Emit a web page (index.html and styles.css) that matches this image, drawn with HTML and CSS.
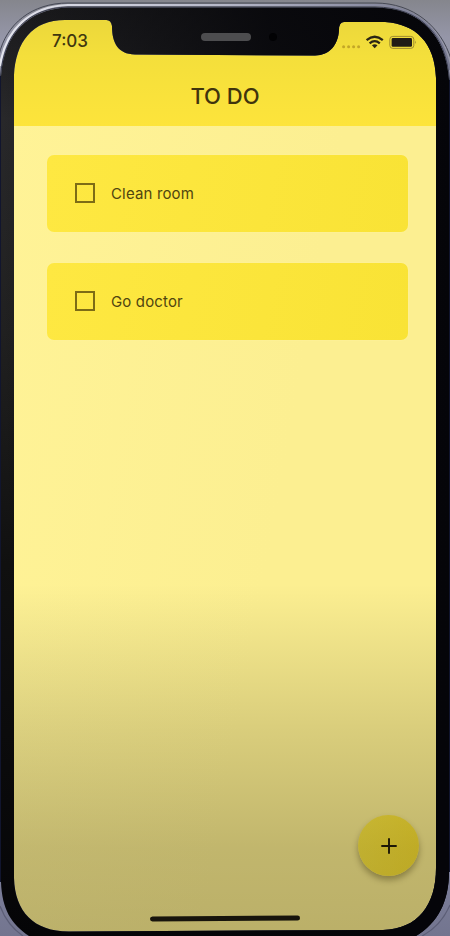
FILE: index.html
```
<!DOCTYPE html>
<html lang="en">
<head>
<meta charset="utf-8">
<title>TO DO</title>
<link rel="stylesheet" href="styles.css">
</head>
<body>
<div class="phone">
  <main class="screen">
    <header class="header">
      <div class="status">
        <span class="time">7:03</span>
        <svg class="status-icons" width="76" height="16" viewBox="0 0 76 16">
          <g fill="#c3a727"><circle cx="2.6" cy="12.7" r="1.5"/><circle cx="7.6" cy="12.7" r="1.5"/><circle cx="12.6" cy="12.7" r="1.5"/><circle cx="17.6" cy="12.7" r="1.5"/></g>
          <g fill="none" stroke="#2b2514" stroke-width="2.3"><path d="M25.6 6.1Q33.7 -.7 41.8 6.1"/><path d="M28.6 9.3Q33.7 5 38.8 9.3"/></g>
          <path fill="#2b2514" d="M30.9 11.3Q33.7 9.2 36.5 11.3L33.7 14.3Z"/>
          <rect x="48.8" y="2.4" width="24" height="12" rx="3" fill="none" stroke="#a08c2f"/>
          <rect x="50.6" y="4.1" width="20.4" height="8.6" rx="1.3" fill="#211c16"/>
          <path d="M74.2 6.5q1.8 1.8 0 3.6z" fill="#a08c2f"/>
        </svg>
      </div>
      <h1 class="title">TO DO</h1>
    </header>
    <section class="list">
      <label class="item"><span class="box"></span><span class="label">Clean room</span></label>
      <label class="item"><span class="box"></span><span class="label">Go doctor</span></label>
    </section>
    <button class="fab" aria-label="Add"><svg width="16" height="16" viewBox="0 0 16 16"><path d="M8 .3V15.7M.3 8H15.7" stroke="#201b08" stroke-width="1.9"/></svg></button>
    <div class="home"></div>
  </main>
  <svg class="frame" width="450" height="936" viewBox="0 0 450 936">
    <defs>
      <linearGradient id="wall" gradientUnits="userSpaceOnUse" x1="0" y1="0" x2="0" y2="936"><stop offset="0" stop-color="#85868d"/><stop offset=".04" stop-color="#9596a8"/><stop offset=".9" stop-color="#8083a0"/><stop offset="1" stop-color="#73758f"/></linearGradient>
      <linearGradient id="bezel" x2="0" y2="1"><stop offset="0" stop-color="#1b1b1d"/><stop offset=".12" stop-color="#28282a"/><stop offset=".35" stop-color="#202020"/><stop offset=".6" stop-color="#101010"/><stop offset="1" stop-color="#050507"/></linearGradient>
      <linearGradient id="dark"><stop offset="0" stop-color="#050509" stop-opacity="0"/><stop offset=".6" stop-color="#050509" stop-opacity=".8"/><stop offset="1" stop-color="#050509"/></linearGradient>
      <linearGradient id="rim" gradientUnits="userSpaceOnUse" x1="0" y1="0" x2="450" y2="0"><stop offset="0" stop-color="#e4e5ee"/><stop offset=".5" stop-color="#b5b7c8"/><stop offset="1" stop-color="#74768e"/></linearGradient>
    </defs>
    <g fill-rule="evenodd">
      <path fill="url(#wall)" d="M0 0H450V936H0Z M14 75C16 42 32 20 65 20H105Q111 19 112 26C112 43 118 54 135 54.5L315 55.5C330 55 338 45 339 30Q339 22 344 22L385 22C416 24 435 43 436 78V868C436 905 418 929 383 930L70 931.5C34 932 15 912 14 878Z"/>
      <path fill="url(#bezel)" d="M1 76C4 34 28 9 68 7.5H375C421 8 446 36 449 80V872C449 901 438 923 416 936H29C11 924 2 909 1 882Z M14 75C16 42 32 20 65 20H105Q111 19 112 26C112 43 118 54 135 54.5L315 55.5C330 55 338 45 339 30Q339 22 344 22L385 22C416 24 435 43 436 78V868C436 905 418 929 383 930L70 931.5C34 932 15 912 14 878Z"/>
      <path fill="url(#dark)" d="M1 76C4 34 28 9 68 7.5H375C421 8 446 36 449 80V872C449 901 438 923 416 936H29C11 924 2 909 1 882Z M14 75C16 42 32 20 65 20H105Q111 19 112 26C112 43 118 54 135 54.5L315 55.5C330 55 338 45 339 30Q339 22 344 22L385 22C416 24 435 43 436 78V868C436 905 418 929 383 930L70 931.5C34 932 15 912 14 878Z"/>
    </g>
    <g fill="none">
      <path stroke="#454855" d="M-1 55C6 24 32 3 68 3H375C414 3 441 27 451 59"/>
      <path stroke="url(#rim)" stroke-width="2.2" d="M0 66C5 30 30 6 68 5H375C416 5.500 443 31 450 70"/>
      <path stroke="#373a4c" stroke-width="1" d="M.5 76C4 33 28 8 68 7H375C421 7.500 446 35 449.500 80"/>
      <path stroke="#5c5e76" stroke-width="1.3" d="M0 906Q7 925 23 936M450 905Q441 926 422 936"/>
      <path stroke="#11152e" d="M.5 76V882M449.500 80V872"/>
    </g>
    <rect x="201" y="33" width="50" height="8" rx="4" fill="#4d4d4f"/>
    <circle cx="273" cy="37" r="4" fill="#020204"/>
  </svg>
</div>
</body>
</html>
```
FILE: styles.css
```
* { box-sizing: border-box; }

body {
  margin: 0;
  overflow: hidden;
  background: #8f91a8;
  font-family: Inter, "Liberation Sans", sans-serif;
}

.phone {
  position: relative;
  width: 450px;
  height: 936px;
  padding: 18px 13px 4px;
}

.screen {
  position: relative;
  display: flex;
  flex-direction: column;
  height: 100%;
  background: linear-gradient(100deg, #fff397, #fcef91 60%);
}

.screen::after {
  content: "";
  position: absolute;
  inset: 566px 0 0;
  background: linear-gradient(rgba(18, 12, 0, 0), rgba(18, 12, 0, .15) 42%, rgba(18, 12, 0, .25) 76%, rgba(18, 12, 0, .28));
  pointer-events: none;
}

.header {
  height: 108px;
  background: linear-gradient(#ebd73b, #f4df3b 35%, #fde43b);
}

.status {
  display: flex;
  justify-content: space-between;
  padding: 13px 20px 0 39px;
  height: 64px;
}

.time {
  font-size: 17px;
  line-height: 20px;
  font-weight: 550;
  color: #40370f;
}

.status-icons { margin-top: 3px; }

.title {
  margin: 0;
  font-size: 22px;
  line-height: 28px;
  font-weight: 450;
  text-align: center;
  color: #40340d;
}

.list {
  display: flex;
  flex-direction: column;
  gap: 31px;
  padding: 29px 29px 0 34px;
}

.item {
  display: flex;
  align-items: center;
  gap: 16px;
  height: 77px;
  padding: 0 0 1px 28px;
  border-radius: 7px;
  background: linear-gradient(100deg, #fee842, #f9e335);
  box-shadow: 0 0 2px #fff4a0;
}

.box {
  width: 20px;
  height: 20px;
  border: 2px solid #7d6c15;
}

.label {
  font-size: 15px;
  letter-spacing: .15px;
  color: #504510;
}

.fab {
  display: flex;
  align-items: center;
  justify-content: center;
  width: 61px;
  height: 61px;
  margin: auto 18px 40px auto;
  padding: 0;
  border: 0;
  border-radius: 50%;
  background: linear-gradient(100deg, #fbe742, #f9e031);
  box-shadow: 0 4px 6px rgba(60, 50, 0, .38);
}

.home {
  position: relative;
  z-index: 1;
  width: 150px;
  height: 5px;
  margin: 0 auto 11px;
  border-radius: 3px;
  background: #17140c;
  transform: rotate(-.3deg);
}

.frame {
  position: absolute;
  inset: 0;
  z-index: 2;
  pointer-events: none;
}
```
